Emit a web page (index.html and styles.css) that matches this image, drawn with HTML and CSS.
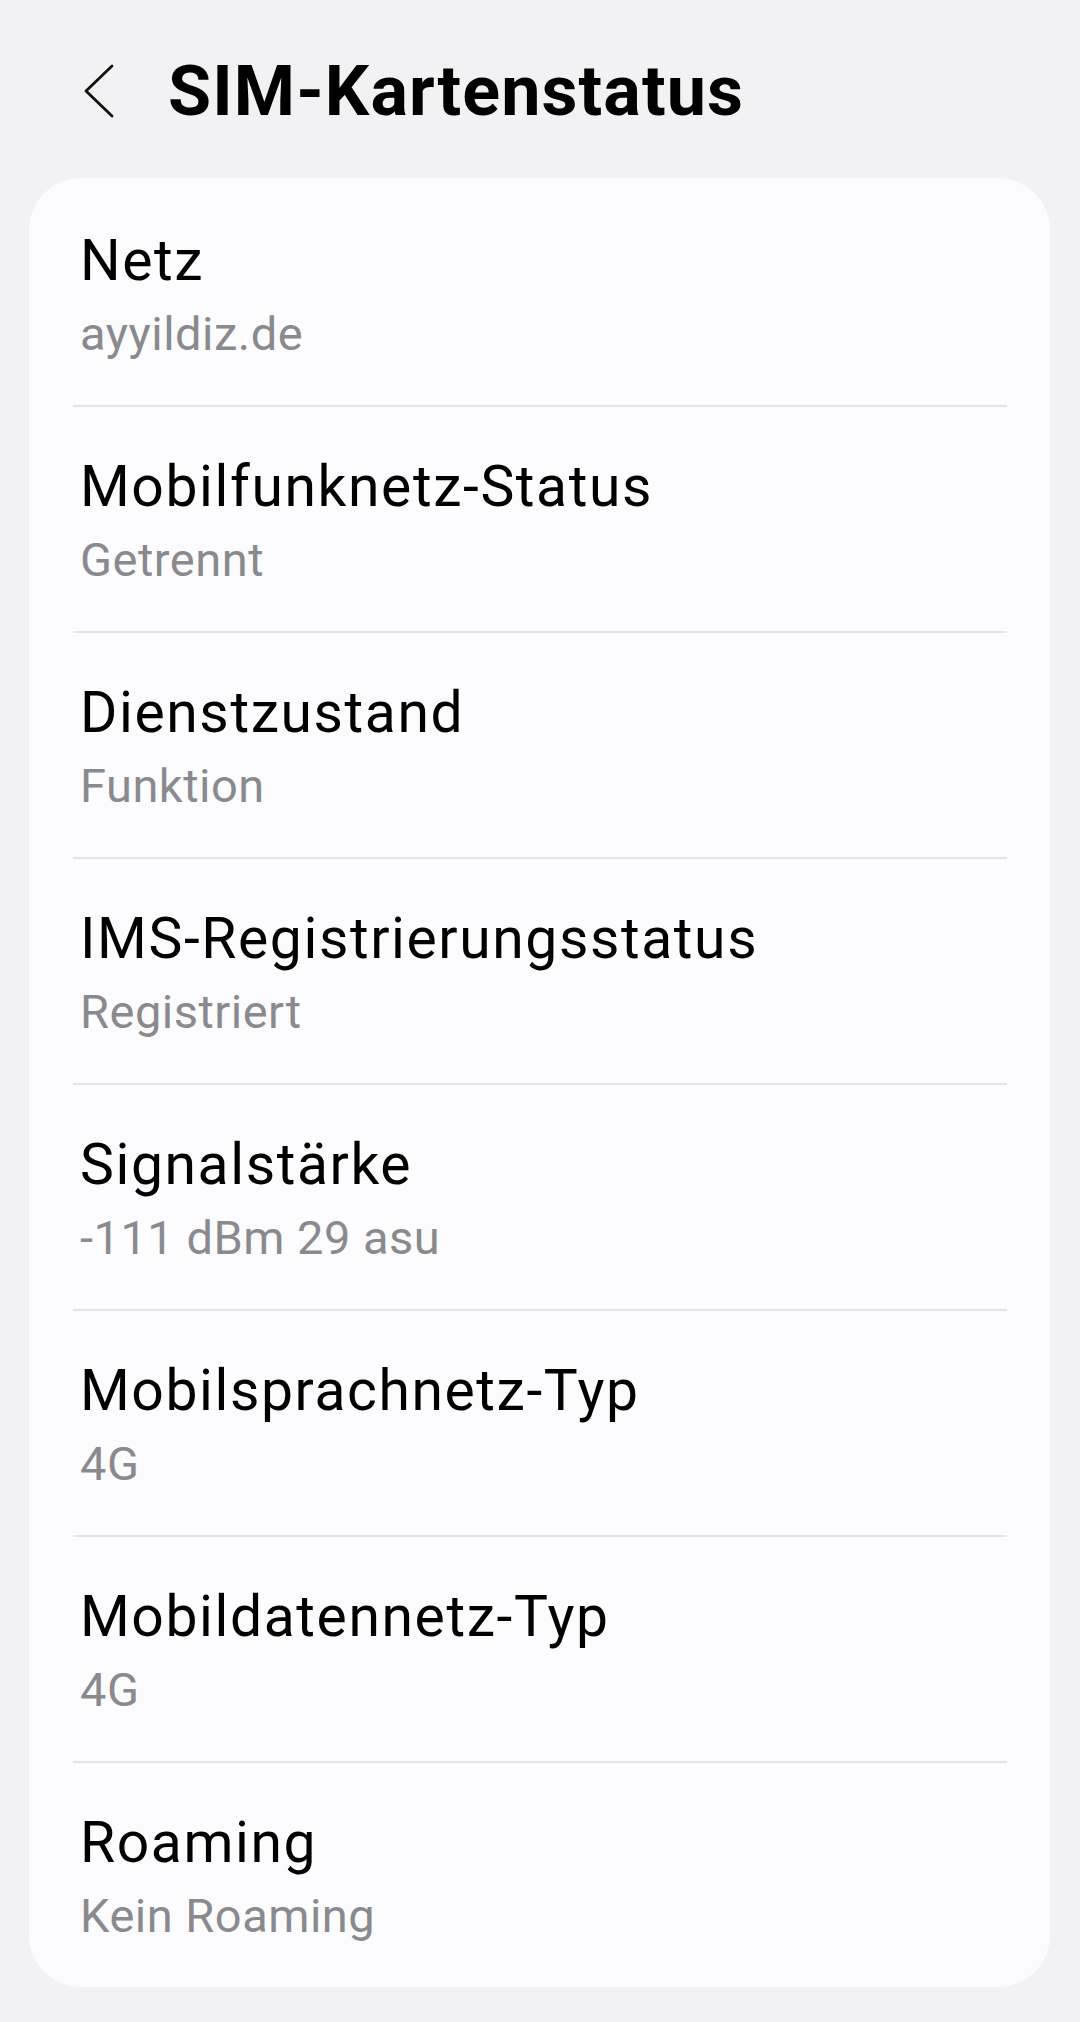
FILE: index.html
```html
<!DOCTYPE html>
<html lang="de">
<head>
<meta charset="utf-8">
<title>SIM-Kartenstatus</title>
<link rel="stylesheet" href="styles.css">
</head>
<body>
<header class="appbar">
  <svg class="back" width="44" height="60" viewBox="0 0 44 60" aria-hidden="true">
    <polyline points="33,5 7,30 33,55" fill="none" stroke="#111" stroke-width="2.8" stroke-linecap="round" stroke-linejoin="round"/>
  </svg>
  <h1 class="title">SIM-Kartenstatus</h1>
</header>
<main class="card">
  <div class="row"><div class="label">Netz</div><div class="value">ayyildiz.de</div></div>
  <div class="divider"></div>
  <div class="row"><div class="label">Mobilfunknetz-Status</div><div class="value">Getrennt</div></div>
  <div class="divider"></div>
  <div class="row"><div class="label">Dienstzustand</div><div class="value">Funktion</div></div>
  <div class="divider"></div>
  <div class="row"><div class="label">IMS-Registrierungsstatus</div><div class="value">Registriert</div></div>
  <div class="divider"></div>
  <div class="row"><div class="label">Signalstärke</div><div class="value">-111 dBm 29 asu</div></div>
  <div class="divider"></div>
  <div class="row"><div class="label">Mobilsprachnetz-Typ</div><div class="value">4G</div></div>
  <div class="divider"></div>
  <div class="row"><div class="label">Mobildatennetz-Typ</div><div class="value">4G</div></div>
  <div class="divider"></div>
  <div class="row"><div class="label">Roaming</div><div class="value">Kein Roaming</div></div>
</main>
</body>
</html>
```
FILE: styles.css
```css
html, body {
  margin: 0;
  padding: 0;
}
body {
  background: #f2f2f4;
  font-family: Roboto, "Noto Sans", "Liberation Sans", sans-serif;
  color: #000;
  width: 1080px;
  height: 2022px;
  overflow: hidden;
}
.appbar {
  display: flex;
  align-items: center;
  height: 82px;
  padding-top: 50px;
  margin-bottom: 46px;
}
.back {
  margin-left: 79px;
  flex: none;
}
.title {
  margin: 0 0 0 45px;
  font-size: 70px;
  font-weight: 700;
  line-height: 82px;
  letter-spacing: 1.1px;
  color: #000;
}
.card {
  margin: 0 30px 0 29px;
  background: #fcfcfe;
  border-radius: 52px;
  padding-top: 3px;
}
.row {
  padding: 46px 52px 33px 51px;
}
.label {
  font-size: 57px;
  line-height: 68px;
  letter-spacing: 1.6px;
  color: #000;
}
.value {
  font-size: 47px;
  line-height: 77px;
  letter-spacing: 0.5px;
  color: #8a8a8e;
}
.divider {
  height: 2px;
  margin: 0 43px 0 44px;
  background: #e4e4e7;
}
```
